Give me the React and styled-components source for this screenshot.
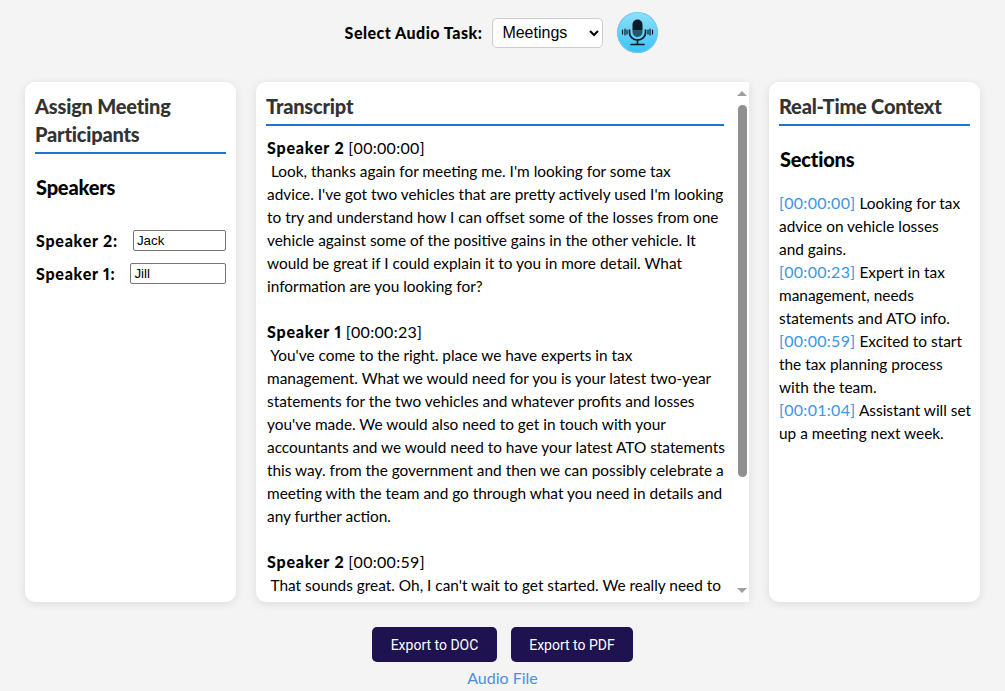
import React from 'react';
import styled, { createGlobalStyle } from 'styled-components';

const GlobalStyle = createGlobalStyle`
  html, body {
    margin: 0;
    padding: 0;
    height: 100%;
    overflow: hidden;
    background-color: #f4f4f4;
    color: #000;
    font-family: "Lato", "Liberation Sans", sans-serif;
  }
`;

// === STYLES ===

const Page = styled.div`
  display: flex;
  flex-direction: column;
  align-items: center;
  padding-top: 12px;
`;

const TaskBar = styled.div`
  display: flex;
  align-items: center;
  height: 41px;
  padding-right: 2px;
`;

const TaskLabel = styled.label`
  font-size: 16px;
  font-weight: 900;
  letter-spacing: 0.48px;
  margin-right: 10px;
`;

const TaskSelect = styled.select`
  width: 111px;
  height: 30px;
  font-family: "Liberation Sans", Arial, sans-serif;
  font-size: 16px;
  padding: 0 5px;
  background: #fff;
  border: 1px solid #ccc;
  border-radius: 5px;
  margin-right: 14px;
`;

const MicButton = styled.button`
  width: 41px;
  height: 41px;
  padding: 0;
  border: none;
  border-radius: 50%;
  background: linear-gradient(180deg, #8fe0f9 0%, #5fd0f7 55%, #38c2f6 100%);
  box-shadow: inset 0 0 0 1px #74c8e8;
  display: flex;
  align-items: center;
  justify-content: center;
`;

const Columns = styled.div`
  display: grid;
  grid-template-columns: 211px 493px 211px;
  gap: 20px;
  height: 520px;
  margin-top: 29px;
`;

const Panel = styled.section`
  background: #fff;
  border-radius: 10px;
  box-shadow: 0 2px 10px rgba(0, 0, 0, 0.1);
  padding: 10px;
  box-sizing: border-box;
  min-height: 0;
`;

const TranscriptPanel = styled(Panel)`
  display: flex;
  padding: 0;
  border-radius: 10px 0 0 10px;
  overflow: hidden;
`;

const TranscriptScroll = styled.div`
  flex: 1;
  min-width: 0;
  padding: 10px;
  overflow-y: auto;
`;

const ScrollRail = styled.div`
  flex: 0 0 15px;
  display: flex;
  flex-direction: column;
  align-items: center;
`;

const RailArrow = styled.div`
  flex: 0 0 23px;
  display: flex;
  align-items: center;
  justify-content: center;

  &::before {
    content: '';
    border-left: 5px solid transparent;
    border-right: 5px solid transparent;
    ${(p) => (p.$up ? 'border-bottom: 5px solid #a0a0a0;' : 'border-top: 5px solid #a0a0a0;')}
  }
`;

const RailThumb = styled.div`
  width: 9px;
  height: 372px;
  margin-left: 1px;
  border-radius: 5px;
  background: #8f8f8f;
`;

const RailSpace = styled.div`
  flex: 1;
`;

const PanelTitle = styled.h2`
  margin: 0;
  padding-bottom: 4px;
  border-bottom: 2px solid #1976d2;
  color: #333;
  font-size: 20px;
  font-weight: 900;
  letter-spacing: -0.2px;
  line-height: 28px;
`;

const SubTitle = styled.h3`
  margin: 19px 0 ${(p) => p.$gap}px;
  padding-left: 1px;
  font-size: 20px;
  font-weight: 900;
  letter-spacing: -0.2px;
  line-height: 28px;
`;

const SpeakerRows = styled.div`
  display: flex;
  flex-direction: column;
  gap: 12px;
`;

const SpeakerRow = styled.div`
  display: flex;
  align-items: center;
  gap: 15px;
  padding-left: 1px;
`;

const SpeakerLabel = styled.label`
  font-size: 16px;
  font-weight: 900;
  letter-spacing: 0.75px;
  font-variant-numeric: proportional-nums;
  white-space: nowrap;
`;

const SpeakerInput = styled.input`
  flex: 1;
  min-width: 0;
  height: 21px;
  box-sizing: border-box;
  padding: 1px 3px;
  font-family: "Liberation Sans", Arial, sans-serif;
  font-size: 13.33px;
  border: 1px solid #767676;
  border-radius: 2px;
`;

const Entry = styled.div`
  margin-top: ${(p) => (p.$first ? 11 : 23)}px;
  padding-left: 1px;
  font-size: 15.4px;
  line-height: 23px;
  white-space: pre;
`;

const EntrySpeaker = styled.strong`
  font-size: 16px;
  font-weight: 900;
  letter-spacing: 0.8px;
  font-variant-numeric: proportional-nums;
  line-height: 0;
`;

const EntryTime = styled.span`
  font-size: 16px;
  letter-spacing: 0.3px;
  line-height: 0;
`;

const ContextList = styled.div`
  font-size: 15.4px;
  line-height: 23px;
  white-space: pre;
`;

const Stamp = styled.a`
  color: #3b97e3;
  font-size: 16px;
  letter-spacing: 0.3px;
  line-height: 0;
`;

const Actions = styled.div`
  display: flex;
  gap: 14px;
  margin-top: 25px;
`;

const ExportButton = styled.button`
  height: 35px;
  width: ${(p) => p.$width}px;
  padding: 0;
  border: none;
  border-radius: 5px;
  background: #1e1250;
  color: #fff;
  font-family: "Roboto", "Liberation Sans", sans-serif;
  font-size: 14px;
  font-weight: 400;
`;

const AudioLink = styled.a`
  margin-top: 7px;
  color: #4a90e2;
  font-size: 16px;
  line-height: 18px;
`;

// === DATA ===

const entries = [
  {
    speaker: 'Speaker 2',
    time: '[00:00:00]',
    text: ` Look, thanks again for meeting me. I'm looking for some tax
advice. I've got two vehicles that are pretty actively used I'm looking
to try and understand how I can offset some of the losses from one
vehicle against some of the positive gains in the other vehicle. It
would be great if I could explain it to you in more detail. What
information are you looking for?`,
  },
  {
    speaker: 'Speaker 1',
    time: '[00:00:23]',
    text: ` You've come to the right. place we have experts in tax
management. What we would need for you is your latest two-year
statements for the two vehicles and whatever profits and losses
you've made. We would also need to get in touch with your
accountants and we would need to have your latest ATO statements
this way. from the government and then we can possibly celebrate a
meeting with the team and go through what you need in details and
any further action.`,
  },
  {
    speaker: 'Speaker 2',
    time: '[00:00:59]',
    text: ` That sounds great. Oh, I can't wait to get started. We really need to
do this.`,
  },
  {
    speaker: 'Speaker 1',
    time: '[00:01:04]',
    text: ` Great. My assistant will set up a meeting with you next week and
we will send through the details.
Thanks for coming in.`,
  },
];

const sections = [
  { time: '[00:00:00]', text: ' Looking for tax\nadvice on vehicle losses\nand gains.' },
  { time: '[00:00:23]', text: ' Expert in tax\nmanagement, needs\nstatements and ATO info.' },
  { time: '[00:00:59]', text: ' Excited to start\nthe tax planning process\nwith the team.' },
  { time: '[00:01:04]', text: ' Assistant will set\nup a meeting next week.' },
];

function MicIcon() {
  return (
    <svg width="41" height="41" viewBox="0 0 41 41" fill="none" stroke="#0b1a26" strokeLinecap="round">
      <path d="M15.5 18v-5.5a5 5 0 0 1 10 0V18z" fill="#0b1a26" stroke="none" />
      <path d="M15.5 18v2a5 5 0 0 0 10 0v-2z" fill="#24566c" stroke="none" />
      <path d="M12.5 18v3a8 7 0 0 0 16 0v-3" strokeWidth="1.7" />
      <path d="M20.5 28v4M14 32.5h13" strokeWidth="1.7" />
      <path d="M5.5 18v4M8 17v6M10 18v4M31 18v4M33 17v6M35.5 18v4" strokeWidth="1.2" />
    </svg>
  );
}

export default function App() {
  return (
    <>
      <GlobalStyle />
      <Page>
        <TaskBar>
          <TaskLabel>Select Audio Task:</TaskLabel>
          <TaskSelect defaultValue="Meetings">
            <option>Meetings</option>
            <option>Interviews</option>
            <option>Lectures</option>
          </TaskSelect>
          <MicButton type="button" aria-label="Record">
            <MicIcon />
          </MicButton>
        </TaskBar>

        <Columns>
          <Panel>
            <PanelTitle>Assign Meeting Participants</PanelTitle>
            <SubTitle $gap={29}>Speakers</SubTitle>
            <SpeakerRows>
              <SpeakerRow>
                <SpeakerLabel>Speaker 2:</SpeakerLabel>
                <SpeakerInput defaultValue="Jack" />
              </SpeakerRow>
              <SpeakerRow>
                <SpeakerLabel>Speaker 1:</SpeakerLabel>
                <SpeakerInput defaultValue="Jill" />
              </SpeakerRow>
            </SpeakerRows>
          </Panel>

          <TranscriptPanel>
            <TranscriptScroll>
              <PanelTitle>Transcript</PanelTitle>
              {entries.map((entry, i) => (
                <Entry key={entry.time} $first={i === 0}>
                  <EntrySpeaker>{entry.speaker}</EntrySpeaker> <EntryTime>{entry.time}</EntryTime>
                  {'\n'}
                  {entry.text}
                </Entry>
              ))}
            </TranscriptScroll>
            <ScrollRail>
              <RailArrow $up />
              <RailThumb />
              <RailSpace />
              <RailArrow />
            </ScrollRail>
          </TranscriptPanel>

          <Panel>
            <PanelTitle>Real-Time Context</PanelTitle>
            <SubTitle $gap={19}>Sections</SubTitle>
            <ContextList>
              {sections.map((section) => (
                <div key={section.time}>
                  <Stamp>{section.time}</Stamp>
                  {section.text}
                </div>
              ))}
            </ContextList>
          </Panel>
        </Columns>

        <Actions>
          <ExportButton $width={125}>Export to DOC</ExportButton>
          <ExportButton $width={122}>Export to PDF</ExportButton>
        </Actions>
        <AudioLink>Audio File</AudioLink>
      </Page>
    </>
  );
}
